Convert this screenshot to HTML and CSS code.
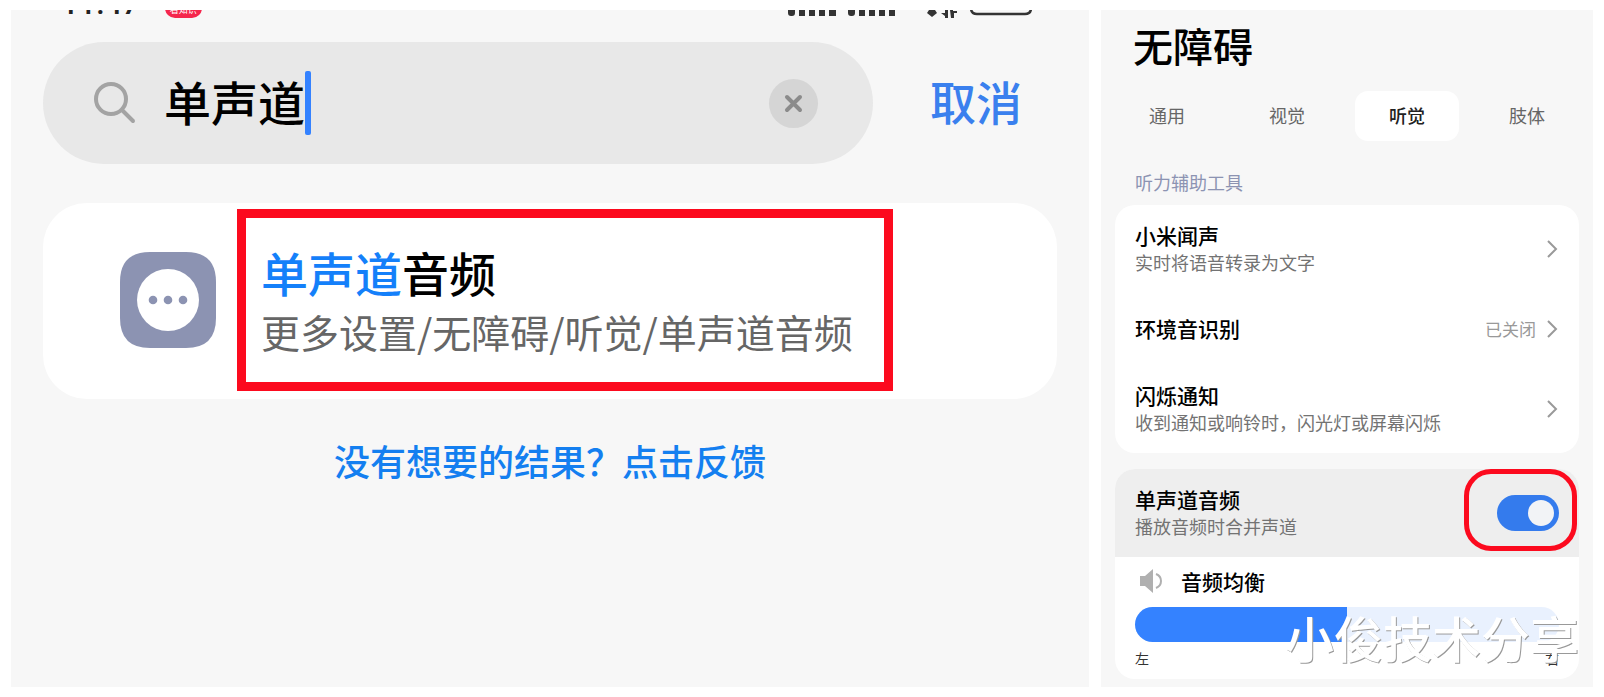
FILE: index.html
```html
<!DOCTYPE html>
<html lang="zh-CN">
<head>
  <meta charset="UTF-8" />
  <meta name="viewport" content="width=device-width, initial-scale=1.0" />
  <title>单声道音频 - 无障碍</title>
  <link rel="stylesheet" href="styles.css">
</head>
<body>
  <div class="screens">
    <!-- Settings search -->
    <main class="screen search-screen">
      <div class="status-bar">
        <span class="time">11:47</span>
        <span class="app-badge">看知识</span>
        <svg class="status-icons" width="244" height="10" viewBox="0 0 244 10" fill="#333">
          <path d="M0 0h7v3q0 3-3 3H3Q0 6 0 3zM11 0h6v6h-6zM21 0h6v6h-6zM31 0h6v6h-6zM41 0h7v6h-7z"/>
          <path d="M60 0h7v3q0 3-3 3h-1q-3 0-3-3zM71 0h6v6h-6zM81 0h6v6h-6zM91 0h6v6h-6zM101 0h6v6h-6z"/>
          <path d="M141 0h6l2 3-5 4-5-4z"/>
          <path d="M157 0h3v8h-3V6l-4-3h4zM162 0h3v1h4v2h-3v5h-3z"/>
          <path d="M183-8v6q0 6 6 6h48q6 0 6-6v-6" fill="none" stroke="#333" stroke-width="2.5"/>
        </svg>
      </div>

      <form class="search-row">
        <div class="search-box">
          <svg class="search-icon" width="42" height="42" viewBox="0 0 42 42" fill="none" stroke="#a3a3a3" stroke-width="4" stroke-linecap="round">
            <circle cx="17" cy="17" r="15"/>
            <path d="M28 28l11 11"/>
          </svg>
          <input class="search-input" type="text" value="单声道" aria-label="搜索设置">
          <span class="caret"></span>
          <button class="clear-btn" type="button" aria-label="清除">
            <svg width="19" height="19" viewBox="0 0 19 19" fill="none" stroke="#8b8b8b" stroke-width="4" stroke-linecap="round">
              <path d="M3 3l13 13M16 3L3 16"/>
            </svg>
          </button>
        </div>
        <button class="cancel-btn" type="button">取消</button>
      </form>

      <section class="result-card">
        <svg class="result-icon" width="96" height="96" viewBox="0 0 96 96">
          <path d="M30 0h36q30 0 30 30v36q0 30-30 30H30Q0 96 0 66V30Q0 0 30 0z" fill="#8c93b2"/>
          <circle cx="48" cy="48" r="31" fill="#fff"/>
          <g fill="#8c93b2">
            <circle cx="33" cy="48" r="4.3"/>
            <circle cx="48" cy="48" r="4.3"/>
            <circle cx="63" cy="48" r="4.3"/>
          </g>
        </svg>
        <div class="result-text">
          <h2><mark>单声道</mark>音频</h2>
          <p>更多设置/无障碍/听觉/单声道音频</p>
        </div>
      </section>

      <a class="feedback" href="#">没有想要的结果？点击反馈</a>
    </main>

    <!-- Accessibility, hearing tab -->
    <aside class="screen access-screen">
      <h1>无障碍</h1>
      <nav class="tabs">
        <button class="tab">通用</button>
        <button class="tab">视觉</button>
        <button class="tab active">听觉</button>
        <button class="tab">肢体</button>
      </nav>

      <h2 class="group-title">听力辅助工具</h2>
      <div class="card list">
        <a class="row" href="#">
          <span class="label">小米闻声<small>实时将语音转录为文字</small></span>
          <svg class="chevron" width="12" height="20" viewBox="0 0 12 20"><path d="M1 2l8 8-8 8"/></svg>
        </a>
        <a class="row" href="#">
          <span class="label">环境音识别</span>
          <span class="value">已关闭</span>
          <svg class="chevron" width="12" height="20" viewBox="0 0 12 20"><path d="M1 2l8 8-8 8"/></svg>
        </a>
        <a class="row" href="#">
          <span class="label">闪烁通知<small>收到通知或响铃时，闪光灯或屏幕闪烁</small></span>
          <svg class="chevron" width="12" height="20" viewBox="0 0 12 20"><path d="M1 2l8 8-8 8"/></svg>
        </a>
      </div>

      <div class="card mono">
        <div class="row pressed">
          <label class="label" for="mono">单声道音频<small>播放音频时合并声道</small></label>
          <input class="switch" type="checkbox" id="mono" checked>
          <span class="ring"></span>
        </div>
        <div class="balance">
          <label class="balance-title" for="balance">
            <svg width="22" height="24" viewBox="0 0 22 24">
              <path d="M0 7h5l8-7v24l-8-7H0z" fill="#b0b0b0"/>
              <path d="M16 5q5 2 5 7t-5 7" fill="none" stroke="#b0b0b0" stroke-width="2"/>
            </svg>
            音频均衡
          </label>
          <input class="slider" type="range" id="balance" min="0" max="100" value="50">
          <div class="ends"><span>左</span><span>右</span></div>
        </div>
        <span class="watermark">小俊技术分享</span>
      </div>
    </aside>
  </div>
</body>
</html>
```

FILE: styles.css
```css
* { box-sizing: border-box; }
body { margin: 0; background: #fff; color: #000; font-family: "Noto Sans CJK SC", sans-serif; }
h1, h2, p { margin: 0; font-weight: 400; }
button, input { font-family: inherit; border: none; background: none; padding: 0; margin: 0; }
a { text-decoration: none; color: inherit; }
svg { display: block; flex-shrink: 0; }

.screens { display: grid; grid-template-columns: 1078fr 492fr; gap: 12px; padding: 10px 11px; min-height: 100vh; }
.screen { background: #f7f7f7; overflow: hidden; }

/* search */
.search-screen { padding: 0 32px; }
.status-bar { display: flex; align-items: flex-start; height: 32px; padding: 0 25px 0 18px; }
.time { margin-top: -24px; font: 500 31px/36px Roboto, sans-serif; color: #222; }
.app-badge { width: 37px; height: 24px; margin: -16px 0 0 25px; border-radius: 10px; background: #f5264c; color: #fff; font-size: 9px; line-height: 32px; text-align: center; }
.status-icons { margin-left: auto; }
.search-row { display: flex; align-items: center; }
.search-box { flex: 1; display: flex; align-items: center; height: 122px; padding: 0 55px 0 51px; border-radius: 61px; background: #e8e8e8; }
.search-input { width: 3em; height: 64px; margin-left: 28px; padding-bottom: 6px; font-size: 47px; font-weight: 500; color: #000; outline: none; }
.caret { width: 6px; height: 64px; border-radius: 2px; background: #3482ff; }
.clear-btn { display: flex; align-items: center; justify-content: center; width: 49px; height: 49px; margin-left: auto; border-radius: 50%; background: #d5d5d5; }
.cancel-btn { padding: 0 35px 6px 57px; font-size: 46px; font-weight: 500; line-height: 64px; color: #3a80ee; }

.result-card { display: flex; align-items: center; margin-top: 39px; padding: 6px 77px 8px; border-radius: 44px; background: #fff; }
.result-text { margin-left: 21px; padding: 22px 31px 24px 15px; border: 9px solid #fc0a1e; white-space: nowrap; }
.result-text h2 { font-size: 47px; font-weight: 500; line-height: 64px; }
.result-text mark { background: none; color: #1480fa; }
.result-text p { font-size: 39px; line-height: 54px; color: #666; }
.feedback { display: block; width: max-content; margin: 35px auto 0; font-size: 36px; font-weight: 500; line-height: 52px; color: #147ff0; }

/* accessibility */
.access-screen { padding: 9px 14px 8px; }
.access-screen h1 { padding-left: 18px; font-size: 40px; font-weight: 500; line-height: 52px; }
.tabs { display: grid; grid-template-columns: repeat(4, 1fr); gap: 16px; margin-top: 20px; }
.tab { height: 50px; padding-bottom: 2px; border-radius: 13px; font-size: 18px; color: #666; }
.tab.active { background: #fff; color: #222; font-weight: 500; }
.group-title { margin-top: 28px; padding-left: 20px; font-size: 18px; line-height: 26px; color: #8c93b2; }
.card { position: relative; border-radius: 20px; background: #fff; }
.list { margin-top: 10px; padding: 4px 0; }
.row { display: flex; align-items: center; height: 80px; padding: 0 20px; }
.label { flex: 1; padding-bottom: 2px; font-size: 21px; line-height: 28px; font-weight: 500; }
.label small { display: block; font-size: 18px; line-height: 26px; font-weight: 400; color: #737373; }
.value { margin-right: 11px; padding-bottom: 2px; font-size: 17px; color: #999; }
.chevron { fill: none; stroke: #999; stroke-width: 2; }

.mono { margin-top: 16px; }
.pressed { position: relative; height: 88px; border-radius: 20px 20px 0 0; background: #eee; }
.switch { appearance: none; display: flex; align-items: center; justify-content: flex-end; width: 62px; height: 36px; padding: 0 5px; border-radius: 18px; background: #347bed; }
.switch::before { content: ""; width: 26px; height: 26px; border-radius: 50%; background: #f2f3f6; }
.ring { position: absolute; top: 0; right: 2px; width: 113px; height: 82px; border: 5px solid #fc0a1e; border-radius: 27px; pointer-events: none; }
.balance { padding: 10px 20px 8px; }
.balance-title { display: flex; align-items: center; gap: 19px; padding-left: 5px; font-size: 21px; line-height: 28px; font-weight: 500; }
.slider { appearance: none; display: block; width: 100%; height: 35px; margin-top: 12px; border-radius: 18px; background: linear-gradient(to right, #3482ff 50%, #e9f1fe 50%); }
.slider::-webkit-slider-thumb { appearance: none; width: 1px; height: 35px; }
.ends { display: flex; justify-content: space-between; margin-top: 3px; font-size: 14px; line-height: 26px; color: #333; }
.watermark { position: absolute; right: 0; bottom: 7px; font-size: 49px; line-height: 70px; font-weight: 500; color: #fff; text-shadow: 1px 1px 0 #999; white-space: nowrap; pointer-events: none; }
```
